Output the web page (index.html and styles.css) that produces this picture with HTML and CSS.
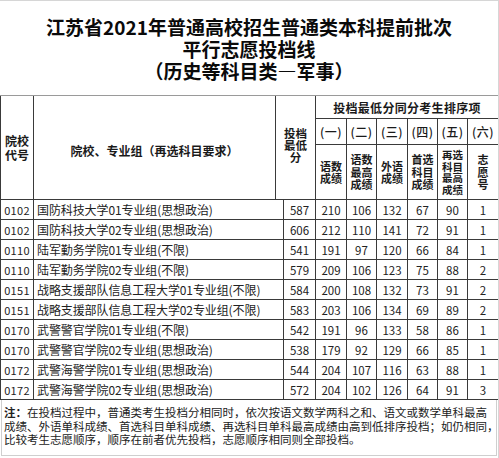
FILE: index.html
```html
<!DOCTYPE html>
<html lang="zh-CN">
<head>
<meta charset="utf-8">
<link rel="stylesheet" href="styles.css">
</head>
<body>
<div class="page">
  <div class="title">
    <div>江苏省2021年普通高校招生普通类本科提前批次</div>
    <div>平行志愿投档线</div>
    <div>（历史等科目类—军事）</div>
  </div>

  <div class="head">
    <div class="c h-code">院校<br>代号</div>
    <div class="c h-name">院校、专业组（再选科目要求）</div>
    <div class="c h-score">投档<br>最低<br>分</div>
    <div class="c h-rank">投档最低分同分考生排序项</div>
    <div class="c num">(一)</div>
    <div class="c num">(二)</div>
    <div class="c num">(三)</div>
    <div class="c num">(四)</div>
    <div class="c num">(五)</div>
    <div class="c num">(六)</div>
    <div class="c sub">语数<br>成绩</div>
    <div class="c sub">语数<br>最高<br>成绩</div>
    <div class="c sub">外语<br>成绩</div>
    <div class="c sub">首选<br>科目<br>成绩</div>
    <div class="c sub tight">再选<br>科目<br>最高<br>成绩</div>
    <div class="c sub">志<br>愿<br>号</div>
  </div>

  <div class="body">
    <div class="d code">0102</div><div class="d name">国防科技大学01专业组(思想政治)</div><div class="d n">587</div><div class="d n">210</div><div class="d n">106</div><div class="d n">132</div><div class="d n">67</div><div class="d n">90</div><div class="d n">1</div>
    <div class="d code">0102</div><div class="d name">国防科技大学02专业组(思想政治)</div><div class="d n">606</div><div class="d n">212</div><div class="d n">110</div><div class="d n">141</div><div class="d n">72</div><div class="d n">91</div><div class="d n">1</div>
    <div class="d code">0110</div><div class="d name">陆军勤务学院01专业组(不限)</div><div class="d n">541</div><div class="d n">191</div><div class="d n">97</div><div class="d n">120</div><div class="d n">66</div><div class="d n">84</div><div class="d n">1</div>
    <div class="d code">0110</div><div class="d name">陆军勤务学院02专业组(不限)</div><div class="d n">579</div><div class="d n">209</div><div class="d n">106</div><div class="d n">123</div><div class="d n">75</div><div class="d n">88</div><div class="d n">2</div>
    <div class="d code">0151</div><div class="d name">战略支援部队信息工程大学01专业组(不限)</div><div class="d n">584</div><div class="d n">200</div><div class="d n">108</div><div class="d n">132</div><div class="d n">73</div><div class="d n">91</div><div class="d n">2</div>
    <div class="d code">0151</div><div class="d name">战略支援部队信息工程大学02专业组(不限)</div><div class="d n">583</div><div class="d n">203</div><div class="d n">106</div><div class="d n">134</div><div class="d n">69</div><div class="d n">89</div><div class="d n">2</div>
    <div class="d code">0170</div><div class="d name">武警警官学院01专业组(不限)</div><div class="d n">542</div><div class="d n">191</div><div class="d n">96</div><div class="d n">133</div><div class="d n">58</div><div class="d n">86</div><div class="d n">1</div>
    <div class="d code">0170</div><div class="d name">武警警官学院02专业组(思想政治)</div><div class="d n">538</div><div class="d n">179</div><div class="d n">92</div><div class="d n">129</div><div class="d n">66</div><div class="d n">85</div><div class="d n">1</div>
    <div class="d code">0172</div><div class="d name">武警海警学院01专业组(思想政治)</div><div class="d n">544</div><div class="d n">204</div><div class="d n">107</div><div class="d n">116</div><div class="d n">63</div><div class="d n">88</div><div class="d n">1</div>
    <div class="d code">0172</div><div class="d name">武警海警学院02专业组(思想政治)</div><div class="d n">572</div><div class="d n">204</div><div class="d n">102</div><div class="d n">126</div><div class="d n">64</div><div class="d n">91</div><div class="d n">3</div>
  </div>

  <div class="note">
    <b>注：</b>在投档过程中，普通类考生投档分相同时，依次按语文数学两科之和、语文或数学单科最高<br>成绩、外语单科成绩、首选科目单科成绩、再选科目单科最高成绩由高到低排序投档；如仍相同，<br>比较考生志愿顺序，顺序在前者优先投档，志愿顺序相同则全部投档。
  </div>
</div>
</body>
</html>
```

FILE: styles.css
```css
html, body {
  margin: 0;
  padding: 0;
  background: #fff;
}

.page {
  width: 499px;
  height: 458px;
  box-sizing: border-box;
  border-top: 1px solid #d6d6d6;
  border-right: 1px solid #d6d6d6;
  font-family: "Noto Sans CJK SC", "Noto Sans", sans-serif;
  color: #111;
  overflow: hidden;
}

.title {
  height: 94px;
  box-sizing: border-box;
  padding-top: 15px;
  text-align: center;
  font-size: 19px;
  line-height: 22px;
  font-weight: 700;
  color: #0a0a0a;
}

.head {
  display: grid;
  grid-template-columns: 32px 241px 39px 30px 29px 30px 29px 29px 30px;
  grid-template-rows: 22px 25px 54px;
  gap: 1px;
  padding: 0 1px 0 1px;
  background: #3a3a3a;
  border-top: 1px solid #9a9a9a;
  width: 498px;
  box-sizing: border-box;
}

.body {
  display: grid;
  grid-template-columns: 32px 249px 31px 30px 29px 30px 29px 29px 30px;
  grid-auto-rows: 19px;
  gap: 1px;
  padding: 1px;
  background: #3a3a3a;
  width: 499px;
  box-sizing: border-box;
}

.c {
  background: #fff;
  display: flex;
  align-items: center;
  justify-content: center;
  text-align: center;
  font-weight: 700;
  color: #1a1a1a;
}

.h-code {
  grid-row: 1 / 4;
  grid-column: 1;
  font-size: 12px;
  line-height: 14px;
}

.h-name {
  grid-row: 1 / 4;
  grid-column: 2;
  font-size: 12px;
  padding-top: 5px;
  box-sizing: border-box;
}

.h-score {
  grid-row: 1 / 4;
  grid-column: 3;
  font-size: 11.5px;
  line-height: 12px;
  padding-bottom: 6px;
  box-sizing: border-box;
}

.h-rank {
  grid-row: 1;
  grid-column: 4 / 10;
  font-size: 12px;
  letter-spacing: 0.3px;
}

.num {
  font-size: 12px;
  font-weight: 500;
  letter-spacing: 0.5px;
}

.sub {
  font-size: 11px;
  line-height: 12.5px;
}

.sub.tight {
  font-size: 10.5px;
  line-height: 11.5px;
}

.d {
  background: #fff;
  display: flex;
  align-items: center;
  font-size: 12px;
  color: #222;
}

.code {
  justify-content: center;
  font-size: 11px;
  letter-spacing: 0.3px;
}

.name {
  padding-left: 3px;
  white-space: nowrap;
  letter-spacing: -0.1px;
}

.n {
  justify-content: center;
  font-size: 11.5px;
}

.note {
  margin: 0 1px 0 1px;
  height: 56px;
  box-sizing: border-box;
  border: 1px solid #cfcfcf;
  border-top: none;
  padding: 6px 0 0 2px;
  font-size: 11.5px;
  line-height: 13.5px;
  color: #222;
  white-space: nowrap;
}

.note b {
  font-weight: 700;
}
```
